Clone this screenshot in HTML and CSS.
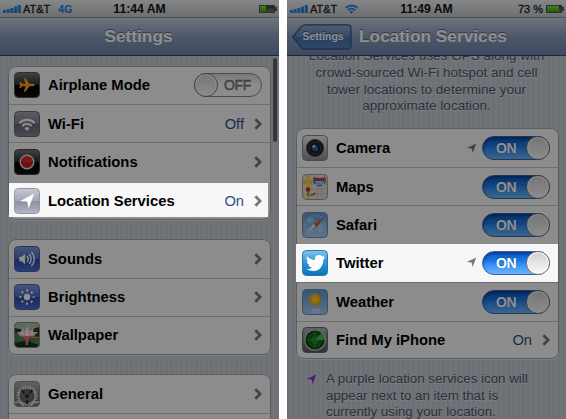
FILE: index.html
```html
<!DOCTYPE html>
<html lang="en">
<head>
<meta charset="utf-8">
<title>Settings</title>
<link rel="stylesheet" href="styles.css">
</head>
<body>
<svg class="defs" width="0" height="0">
  <defs>
    <linearGradient id="gDark" x2="0" y2="1"><stop offset="0" stop-color="#777"/><stop offset=".48" stop-color="#303030"/><stop offset=".5" stop-color="#000"/><stop offset="1" stop-color="#111"/></linearGradient>
    <linearGradient id="gGray" x2="0" y2="1"><stop offset="0" stop-color="#c6c8d2"/><stop offset=".5" stop-color="#a3a6b4"/><stop offset=".52" stop-color="#8c8fa0"/><stop offset="1" stop-color="#b4b6c8"/></linearGradient>
    <linearGradient id="gWifi" x2="0" y2="1"><stop offset="0" stop-color="#a4a6ae"/><stop offset=".5" stop-color="#80838c"/><stop offset=".52" stop-color="#63666f"/><stop offset="1" stop-color="#858895"/></linearGradient>
    <linearGradient id="gBlue" x2="0" y2="1"><stop offset="0" stop-color="#839be0"/><stop offset=".5" stop-color="#496abd"/><stop offset=".52" stop-color="#2a4aa6"/><stop offset="1" stop-color="#4d6fd0"/></linearGradient>
    <linearGradient id="gSky" x2="0" y2="1"><stop offset="0" stop-color="#5a98d8"/><stop offset="1" stop-color="#a4cdf5"/></linearGradient>
    <linearGradient id="gTw" x2="0" y2="1"><stop offset="0" stop-color="#7fc4ee"/><stop offset=".5" stop-color="#2f93d6"/><stop offset="1" stop-color="#0873bd"/></linearGradient>
    <linearGradient id="gMetal" x2="0" y2="1"><stop offset="0" stop-color="#eee"/><stop offset="1" stop-color="#8b8d94"/></linearGradient>
    <linearGradient id="gGear" x2="0" y2="1"><stop offset="0" stop-color="#b0b0b0"/><stop offset="1" stop-color="#585858"/></linearGradient>
    <radialGradient id="gSun"><stop offset="0" stop-color="#ffe34a"/><stop offset="1" stop-color="#f09b10"/></radialGradient>
    <radialGradient id="gRadar"><stop offset="0" stop-color="#1c8a24"/><stop offset="1" stop-color="#063a0c"/></radialGradient>
    <clipPath id="tile"><rect x=".5" y=".5" width="25" height="25" rx="4"/></clipPath>
    <symbol id="chev" viewBox="0 0 8 12"><path d="M1.4 1.2 6.100 6 1.4 10.8" fill="none" stroke="currentColor" stroke-width="2.7"/></symbol>
    <symbol id="arrow" viewBox="0 0 12 12"><path d="M11.2.6 7.2 11 6.1 5.9 .8 5.4z" fill="currentColor"/></symbol>
    <symbol id="bars" viewBox="0 0 18 8"><path d="M0 5h3v3H0zM3.7 4h3v4h-3zM7.4 3h3v5h-3zM11.1 1.5h3V8h-3zM14.8 0h3v8h-3z" fill="#2d7fdd"/></symbol>
  </defs>
</svg>
<div class="screens">
  <section class="phone">
    <header class="status">
      <svg class="bars"><use href="#bars"/></svg><span class="carrier">AT&amp;T</span><span class="net">4G</span>
      <span class="clock">11:44 AM</span>
      <span class="battery low"><i></i></span>
    </header>
    <nav class="nav"><h1>Settings</h1></nav>
    <main class="body">
      <div class="card">
        <div class="row">
          <svg class="icon" viewBox="0 0 26 26"><rect x=".5" y=".5" width="25" height="25" rx="4" fill="url(#gDark)" stroke="#555"/><path d="M20.8 13c0-.8-1-1.2-2-1.2h-3.4L11.5 6.3H9.8l1.7 5.5H8.2L6.7 10H5.3l.8 3-.8 3h1.4l1.5-1.8h3.3l-1.7 5.5h1.7l3.9-5.5h3.4c1 0 2-.4 2-1.2z" fill="#ffa014"/></svg>
          <span class="label">Airplane Mode</span><span class="toggle off"><b>OFF</b><i></i></span>
        </div>
        <div class="row">
          <svg class="icon" viewBox="0 0 26 26"><rect x=".5" y=".5" width="25" height="25" rx="4" fill="url(#gWifi)" stroke="#676a73"/><g fill="none" stroke="#fff" stroke-width="2"><path d="M5.4 12a10.8 10.8 0 0 1 15.2 0M8.2 15a6.8 6.8 0 0 1 9.6 0"/></g><path d="M10.5 17.3a3.6 3.6 0 0 1 5 0L13 20z" fill="#fff"/></svg>
          <span class="label">Wi-Fi</span><span class="value">Off</span><svg class="chev"><use href="#chev"/></svg>
        </div>
        <div class="row">
          <svg class="icon" viewBox="0 0 26 26"><rect x=".5" y=".5" width="25" height="25" rx="4" fill="url(#gDark)" stroke="#444"/><circle cx="13" cy="13" r="6.8" fill="#c51d16" stroke="#ddd" stroke-width="1.5"/><path d="M7.5 12a5.6 5.6 0 0 1 11 0 12 12 0 0 1-11 0" fill="#e0564d" opacity=".4"/></svg>
          <span class="label">Notifications</span><svg class="chev"><use href="#chev"/></svg>
        </div>
        <div class="row lit lit-a">
          <svg class="icon" viewBox="0 0 26 26"><rect x=".5" y=".5" width="25" height="25" rx="4" fill="url(#gGray)" stroke="#9295a5"/><path d="M20.2 5.5 14.6 20.4l-1.3-6.8-7.4-.3z" fill="#fff"/></svg>
          <span class="label">Location Services</span><span class="value">On</span><svg class="chev"><use href="#chev"/></svg>
        </div>
      </div>
      <div class="card">
        <div class="row">
          <svg class="icon" viewBox="0 0 26 26"><rect x=".5" y=".5" width="25" height="25" rx="4" fill="url(#gBlue)" stroke="#4a62a8"/><path d="M5.3 10.8h2.4l3.4-3v10.4l-3.4-3H5.3z" fill="#fff"/><g fill="none" stroke="#fff" stroke-width="1.4"><path d="M13 10.3a4 4 0 0 1 0 5.4M15.2 8.2a7 7 0 0 1 0 9.6M17.4 6a10 10 0 0 1 0 14"/></g></svg>
          <span class="label">Sounds</span><svg class="chev"><use href="#chev"/></svg>
        </div>
        <div class="row">
          <svg class="icon" viewBox="0 0 26 26"><rect x=".5" y=".5" width="25" height="25" rx="4" fill="url(#gBlue)" stroke="#4a62a8"/><circle cx="13" cy="13" r="3.2" fill="#fff"/><circle cx="13" cy="13" r="6.6" fill="none" stroke="#fff" stroke-width="2.2" stroke-dasharray="1.9 3.284" stroke-dashoffset=".95"/></svg>
          <span class="label">Brightness</span><svg class="chev"><use href="#chev"/></svg>
        </div>
        <div class="row">
          <svg class="icon" viewBox="0 0 26 26"><g clip-path="url(#tile)"><path fill="#263f2a" d="M0 0h26v26H0z"/><path fill="#a5c0a0" d="M0 0h26v5L13 8 0 6z"/><path fill="#4c8048" d="M0 10l9 3 3 5-6 5-6-2zM15 16l11-1v9l-8-2z"/><path fill="#1b2b20" d="M0 21l11-2 15 4v3H0z"/><path fill="#f1c3cd" d="M13 4l3 4 4-3-1 5 5 0-4 4-7 2-7-2-3-4 5 0-1-5 4 3z"/><path fill="#fff0ee" d="M13 5l2 8-2 2-2-2zM7 8l4 5-4-1zM19 8l-4 5 4-1z"/><path fill="#e36a80" d="M8 14h10l-3 3-1 6h-2l-1-6zM18 14l8 1v1l-9 0z"/></g><rect x=".5" y=".5" width="25" height="25" rx="4" fill="none" stroke="#788"/></svg>
          <span class="label">Wallpaper</span><svg class="chev"><use href="#chev"/></svg>
        </div>
      </div>
      <div class="card">
        <div class="row">
          <svg class="icon" viewBox="0 0 26 26"><g clip-path="url(#tile)"><path fill="url(#gGear)" d="M0 0h26v26H0z"/><circle cx="13" cy="15" r="9.6" fill="none" stroke="#eee" stroke-width="2" stroke-dasharray="1.2 1.313"/><circle cx="13" cy="15" r="8.200" fill="#666" stroke="#ddd" stroke-width="1.2"/><path d="M13 15 7.500 9M13 15l5.500-6M13 15v8" stroke="#333" stroke-width="2.400"/><circle cx="13" cy="15" r="3.200" fill="#333" stroke="#888"/><g fill="#777" stroke="#ddd" stroke-width="1.6"><circle cx="3" cy="27.500" r="6.500"/><circle cx="23" cy="27.500" r="6.500"/></g></g><rect x=".5" y=".5" width="25" height="25" rx="4" fill="none" stroke="#888"/></svg>
          <span class="label">General</span><svg class="chev"><use href="#chev"/></svg>
        </div>
        <div class="row"></div>
      </div>
    </main>
    <div class="scrollbar"></div>
  </section>

  <section class="phone right">
    <header class="status">
      <svg class="bars"><use href="#bars"/></svg><span class="carrier">AT&amp;T</span>
      <svg class="wifi" viewBox="0 0 12 9"><g fill="none" stroke="#2d7fdd" stroke-width="1.9"><path d="M.6 3.4a7.7 7.7 0 0 1 10.8 0M2.7 5.6a4.7 4.7 0 0 1 6.6 0"/></g><path d="M4.2 7a2.5 2.5 0 0 1 3.6 0L6 9z" fill="#2d7fdd"/></svg>
      <span class="clock">11:49 AM</span>
      <span class="percent">73 %</span><span class="battery"><i></i></span>
    </header>
    <nav class="nav">
      <span class="back"><svg viewBox="0 0 60 26"><defs><linearGradient id="gBack" x2="0" y2="1"><stop offset="0" stop-color="#8aa5cd"/><stop offset=".5" stop-color="#5f85bb"/><stop offset=".52" stop-color="#4a74b0"/><stop offset="1" stop-color="#557fba"/></linearGradient></defs><path d="M.8 13 9.6 2.2Q11 .8 13 .8h42.500q3.500 0 3.500 3.500v17.400q0 3.500-3.500 3.500H13q-2 0-3.400-1.400z" fill="url(#gBack)" stroke="#36517e" stroke-width="1.2"/></svg><b>Settings</b></span>
      <h1>Location Services</h1>
    </nav>
    <main class="body">
      <p class="intro">Location Services uses GPS along with<br>crowd-sourced Wi-Fi hotspot and cell<br>tower locations to determine your<br>approximate location.</p>
      <div class="card">
        <div class="row">
          <svg class="icon" viewBox="0 0 26 26"><rect x=".5" y=".5" width="25" height="25" rx="4" fill="url(#gMetal)" stroke="#888"/><circle cx="13" cy="13" r="8.600" fill="#222" stroke="#555"/><circle cx="13" cy="13" r="5.6" fill="#0c1726" stroke="#484848"/><circle cx="13" cy="13" r="3.6" fill="#274d78"/><circle cx="12" cy="11.500" r="1.700" fill="#93b8d8"/><circle cx="14.500" cy="14.500" r="1" fill="#6490bd"/></svg>
          <span class="label">Camera</span><svg class="arrow"><use href="#arrow"/></svg><span class="toggle"><b>ON</b><i></i></span>
        </div>
        <div class="row">
          <svg class="icon" viewBox="0 0 26 26"><g clip-path="url(#tile)"><path fill="#e4dfce" d="M0 0h26v26H0z"/><path d="M15 13v13M20 12v14M8 15h18M0 20h26" stroke="#c9c5b5"/><path d="M0 8.500h26" stroke="#f4c52b" stroke-width="4"/><path d="M6.500 0v26" stroke="#f0d24c" stroke-width="3"/><path d="M8 21h3l2-2" stroke="#555" stroke-width="1.200" fill="none"/><circle cx="6" cy="15.500" r="2.300" fill="#d22b20"/><path d="M6 17v5" stroke="#655"/><path d="M11.500 3.500q5.500 2 12 0c2 5-1 8-6 9.500-5-1.500-8-4.500-6-9.500" fill="#3a63bb" stroke="#eee" stroke-width=".7"/><path d="M11.500 3q6 2 12 0v2.500h-12z" fill="#d33b33"/><text x="17.600" y="10.500" class="shield">280</text></g><rect x=".5" y=".5" width="25" height="25" rx="4" fill="none" stroke="#999"/></svg>
          <span class="label">Maps</span><span class="toggle"><b>ON</b><i></i></span>
        </div>
        <div class="row">
          <svg class="icon" viewBox="0 0 26 26"><rect x=".5" y=".5" width="25" height="25" rx="4" fill="url(#gSky)" stroke="#6c8fb5"/><circle cx="13" cy="13.500" r="10" fill="none" stroke="#c4e2fb" stroke-width="1.800" stroke-dasharray=".7 1.920"/><path d="M5 7l6-2 1 4-5 3zM13 13l7-2 2 4-4 6-5-3zM5 16l4-1 3 4-4 3z" fill="#bcdcf4" opacity=".6"/><path d="M22.500 4.500 14.600 15.200 11.400 12z" fill="#e4662a"/><path d="M4.500 22.500 11.400 12l3.200 3.200z" fill="#f1eeea"/><path d="M4.500 22.500 22.500 4.500 14.600 15.200z" fill="#7a3c28" opacity=".4"/></svg>
          <span class="label">Safari</span><span class="toggle"><b>ON</b><i></i></span>
        </div>
        <div class="row lit lit-b">
          <svg class="icon" viewBox="0 0 26 26"><rect x=".5" y=".5" width="25" height="25" rx="4" fill="url(#gTw)" stroke="#2679b3"/><path d="M5 6.200c2.300 2.500 5 3.700 8 3.800-.6-3.300 1.700-5 4-4.900 1.300 0 2.300.5 3.100 1.300l2.600-.9-1.300 2.100 1.900-.3-2 2.100C21.300 16 17.500 21 11.300 21c-2.500 0-4.700-.7-6.600-1.900 2.200.1 4-.4 5.300-1.600-1.900-.2-3.100-1.200-3.700-2.600h1.500C5.900 14.200 4.900 13 4.700 11l1.600.4C4.600 9.800 4.300 8.100 5 6.200z" fill="#fff"/></svg>
          <span class="label">Twitter</span><svg class="arrow"><use href="#arrow"/></svg><span class="toggle"><b>ON</b><i></i></span>
        </div>
        <div class="row">
          <svg class="icon" viewBox="0 0 26 26"><rect x=".5" y=".5" width="25" height="25" rx="4" fill="url(#gSky)" stroke="#6c8fb5"/><circle cx="13" cy="10.500" r="6.200" fill="url(#gSun)"/><text x="13.500" y="24" class="temp">73°</text></svg>
          <span class="label">Weather</span><span class="toggle"><b>ON</b><i></i></span>
        </div>
        <div class="row">
          <svg class="icon" viewBox="0 0 26 26"><rect x=".5" y=".5" width="25" height="25" rx="4" fill="url(#gGear)" stroke="#666"/><circle cx="13" cy="13" r="10.200" fill="url(#gRadar)" stroke="#b5b9b5" stroke-width="1.200"/><path d="M13 13 20 5.500A10 10 0 0 1 22.800 13z" fill="#5ed65a" opacity=".8"/><g fill="none" stroke="#46a149" stroke-width=".5"><circle cx="13" cy="13" r="6.500"/><circle cx="13" cy="13" r="3.300"/><path d="M3 13h20M13 3v20"/></g></svg>
          <span class="label">Find My iPhone</span><span class="value">On</span><svg class="chev"><use href="#chev"/></svg>
        </div>
      </div>
      <div class="note"><svg class="purple"><use href="#arrow"/></svg><p>A purple location services icon will<br>appear next to an item that is<br>currently using your location.</p></div>
    </main>
  </section>
</div>
</body>
</html>
```

FILE: styles.css
```css
* { box-sizing: border-box; }
body { margin: 0; background: #fff; font-family: "Liberation Sans", Arial, sans-serif; overflow: hidden; }
.defs { position: absolute; }
.screens { display: flex; gap: 8px; height: 419px; }
.phone {
  position: relative; width: 279px; height: 419px; overflow: hidden;
  display: flex; flex-direction: column; flex: none;
  background: repeating-linear-gradient(90deg, #c3cad2 0 3px, #cad0d7 3px 5px);
}
/* dims everything except the highlighted row */
.phone::after { content: ""; position: absolute; inset: 0; background: rgba(0, 0, 0, .44); z-index: 2; }

.status {
  position: relative; height: 18px; flex: none; display: flex; align-items: center;
  padding: 0 3px; background: linear-gradient(#eeeff0, #c3c6c9);
  border-bottom: 1px solid #8e9499;
  font-size: 11px; color: #222;
}
.bars { width: 18px; height: 8px; flex: none; }
.carrier { margin-left: 2px; font-size: 11px; -webkit-text-stroke: .3px #222; }
.net { margin-left: 8px; color: #1d78e0; font-size: 10.5px; font-weight: bold; }
.wifi { width: 13px; height: 10px; margin-left: 8px; }
.clock { position: absolute; left: 0; right: 0; text-align: center; font-weight: bold; font-size: 12.2px; color: #111; }
.percent { margin-left: auto; margin-right: 3px; font-size: 11px; -webkit-text-stroke: .3px #222; }
.battery {
  position: relative; width: 16px; height: 8px; padding: 1px;
  background: linear-gradient(#333, #777); border: 1px solid #555; margin-right: 1px;
}
.battery::after { content: ""; position: absolute; right: -3px; top: 1px; width: 2px; height: 4px; background: #555; }
.battery i { display: block; width: 12px; margin: -1px; height: 6px; background: linear-gradient(#8bdc4d, #32a502); }
.battery.low { margin-left: auto; }
.battery.low i { width: 6px; }

.nav {
  height: 38px; flex: none; display: flex; align-items: center; justify-content: center;
  background: linear-gradient(#c4cfdd, #8b9cbb 50%, #6c83ac);
  border-bottom: 1px solid #3c465b; position: relative; z-index: 1;
}
.nav h1 { margin: 0; font-size: 17.3px; line-height: 20px; color: #fff; text-shadow: 0 -1px 0 #56647d; white-space: nowrap; padding: 0 2px 2px 0; }
.back { position: relative; width: 60px; height: 26px; display: flex; align-items: center; justify-content: center; margin-right: 7px; }
.back svg { position: absolute; width: 60px; height: 26px; }
.back b { position: relative; font-size: 10.4px; color: #fff; text-shadow: 0 -1px 0 #2f4b77; padding-left: 2px; }
.nav .back + h1 { padding-right: 57px; margin-right: -3px; }

.body { padding: 9.7px 8px 0; }
.card {
  width: 263px; background: #fafafa; border: 1px solid #a5a9ae; border-radius: 8px;
  box-shadow: 0 1px 0 #dfe3e8; margin-bottom: 19.4px;
}
.row { height: 38.4px; display: flex; align-items: center; padding: 0 8px 0 5px; }
.row:first-child { height: 37.4px; }
.row:last-child { height: 37.8px; }
.row + .row { border-top: 1px solid #c3c3c3; }
.icon { width: 26px; height: 26px; flex: none; margin-right: 8px; }
.label { font-size: 14.8px; line-height: 18px; font-weight: bold; color: #000; flex: 1; white-space: nowrap; }
.value { font-size: 14.7px; line-height: 18px; color: #324f85; margin-right: 10px; }
.chev { width: 8px; height: 12px; flex: none; color: #777; }
.lit { position: relative; z-index: 3; background: #f7f7f7; }
.row.lit { border: 0; }
.row.lit-a { height: 34px; margin: 2px 2px 2px 0; padding-right: 6px; padding-top: 2px; }
.lit-b { margin: 0 0 0 -1px; padding-left: 6px; }

.toggle {
  position: relative; width: 68px; height: 24px; border-radius: 12px; flex: none;
  background: linear-gradient(#0759c0, #1e7ceb 45%, #2d8af2 52%, #70b6fb); border: 1px solid #3a6299;
  box-shadow: inset 0 2px 3px rgba(0, 25, 90, .45);
}
.toggle b { position: absolute; left: 13px; top: 3px; font-size: 14px; line-height: 16px; color: #fff; text-shadow: 0 -1px 1px #1455a5; letter-spacing: -.4px; }
.toggle i {
  position: absolute; right: -1px; top: -1px; width: 24px; height: 24px; border-radius: 50%;
  background: linear-gradient(#d0d0d0, #fafafa); border: 1px solid #777; box-shadow: inset 0 0 0 1px #fff;
}
.toggle.off { background: linear-gradient(#d8d8d8, #fafafa 50%); border-color: #888; box-shadow: none; }
.toggle.off b { left: 29px; color: #777; text-shadow: none; font-weight: normal; -webkit-text-stroke: .5px #777; }
.toggle.off i { right: auto; left: -1px; }
.arrow { width: 11px; height: 11px; color: #777; margin-right: 5px; flex: none; }
.scrollbar { position: absolute; right: 2px; top: 58px; width: 4px; height: 84px; border-radius: 2px; background: #5b6069; }

.right .body { padding-left: 9px; }
.right .row:first-child { height: 38px; }
.right .card { margin-bottom: 12px; }
.intro { margin: -17.500px 0 13px -1px; text-align: center; font-size: 13.5px; line-height: 16.7px; color: #4c566c; text-shadow: 0 1px 0 #e0e4e9; white-space: nowrap; }
.note { display: flex; }
.note p { margin: 0; font-size: 13.35px; line-height: 16.5px; color: #4c566c; text-shadow: 0 1px 0 #e0e4e9; white-space: nowrap; }
.purple { width: 11px; height: 11px; color: #8a2be2; margin: 3px 9px 0 10px; flex: none; }
.shield { font-size: 5.5px; font-weight: bold; fill: #fff; text-anchor: middle; }
.temp { font-size: 6px; fill: #fff; text-anchor: middle; }
```
